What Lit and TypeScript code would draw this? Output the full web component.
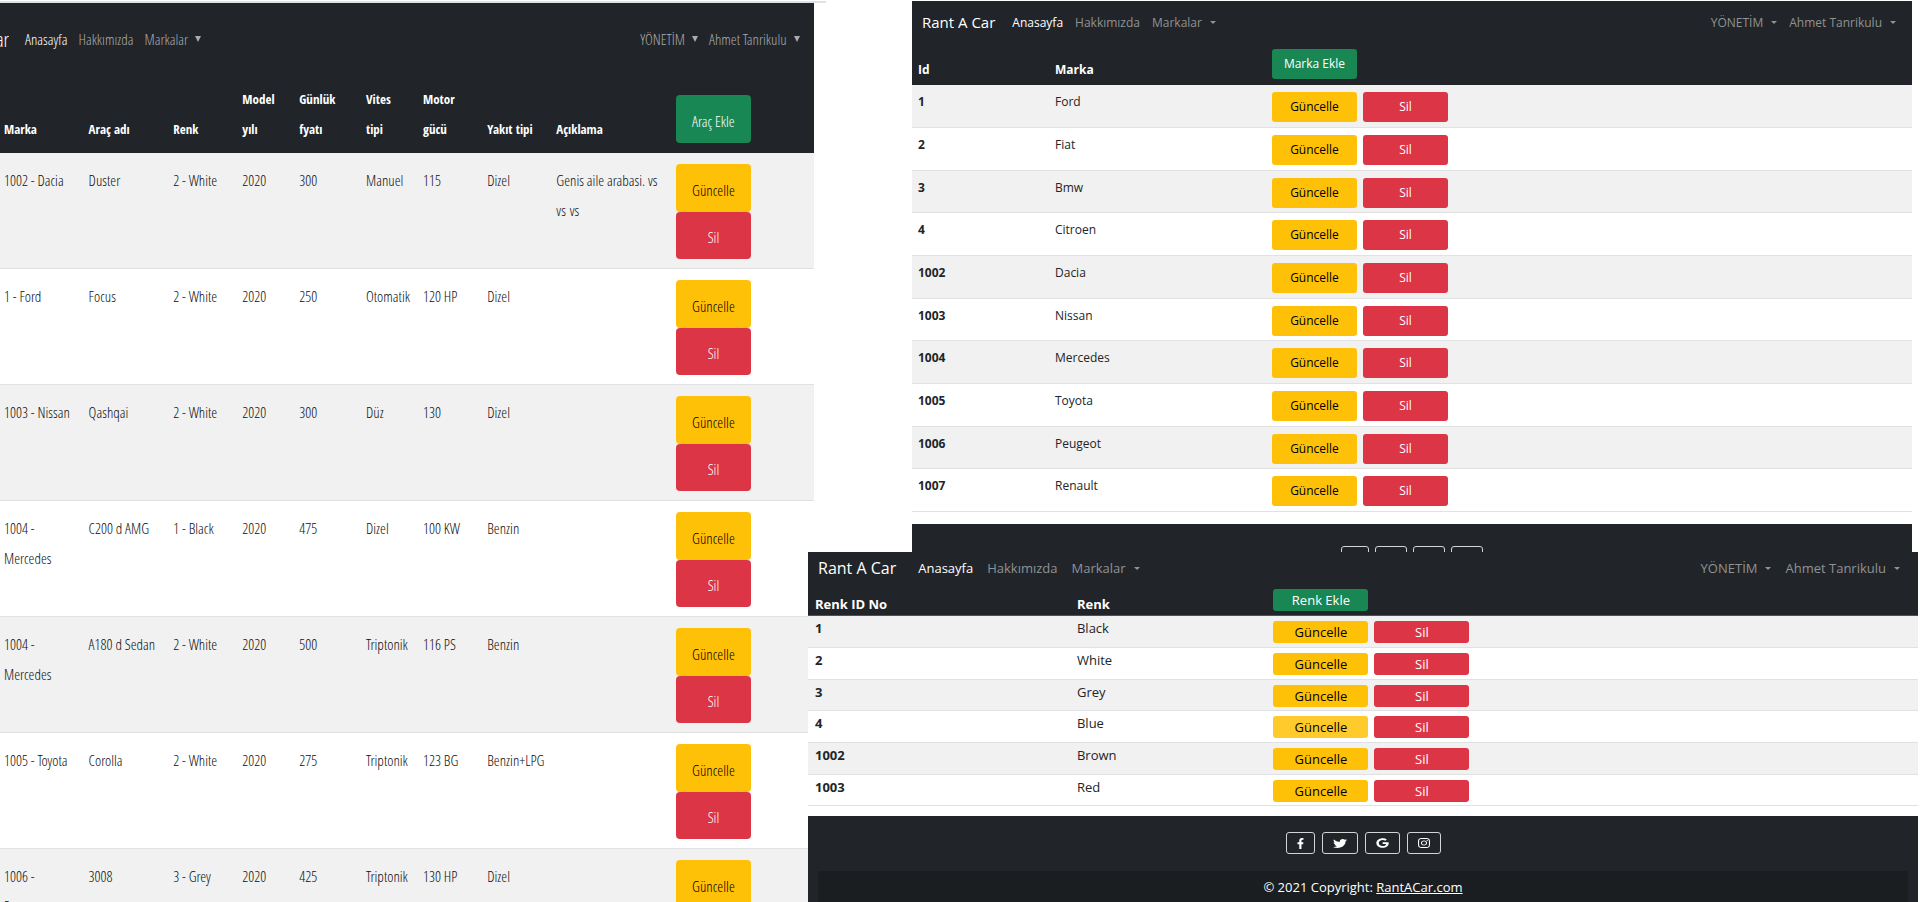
import { LitElement, html, css, svg, nothing } from "lit";
import { customElement } from "lit/decorators.js";
import { classMap } from "lit/directives/class-map.js";

interface Car {
  brand: string;
  name: string;
  color: string;
  year: number;
  price: number;
  gear: string;
  power: string;
  fuel: string;
  note: string;
}

interface Entry {
  id: number;
  label: string;
  active?: boolean;
}

const CARS: Car[] = [
  { brand: "1002 - Dacia", name: "Duster", color: "2 - White", year: 2020, price: 300, gear: "Manuel", power: "115", fuel: "Dizel", note: "Genis aile arabasi. vs vs\u00a0vs" },
  { brand: "1 - Ford", name: "Focus", color: "2 - White", year: 2020, price: 250, gear: "Otomatik", power: "120 HP", fuel: "Dizel", note: "" },
  { brand: "1003 - Nissan", name: "Qashqai", color: "2 - White", year: 2020, price: 300, gear: "Düz", power: "130", fuel: "Dizel", note: "" },
  { brand: "1004 - Mercedes", name: "C200 d AMG", color: "1 - Black", year: 2020, price: 475, gear: "Dizel", power: "100 KW", fuel: "Benzin", note: "" },
  { brand: "1004 - Mercedes", name: "A180 d Sedan", color: "2 - White", year: 2020, price: 500, gear: "Triptonik", power: "116 PS", fuel: "Benzin", note: "" },
  { brand: "1005 - Toyota", name: "Corolla", color: "2 - White", year: 2020, price: 275, gear: "Triptonik", power: "123 BG", fuel: "Benzin+LPG", note: "" },
  { brand: "1006 - Peugeot", name: "3008", color: "3 - Grey", year: 2020, price: 425, gear: "Triptonik", power: "130 HP", fuel: "Dizel", note: "" },
];

const BRANDS: Entry[] = [
  { id: 1, label: "Ford" },
  { id: 2, label: "Fiat" },
  { id: 3, label: "Bmw" },
  { id: 4, label: "Citroen" },
  { id: 1002, label: "Dacia" },
  { id: 1003, label: "Nissan" },
  { id: 1004, label: "Mercedes" },
  { id: 1005, label: "Toyota" },
  { id: 1006, label: "Peugeot" },
  { id: 1007, label: "Renault" },
];

const COLORS: Entry[] = [
  { id: 1, label: "Black" },
  { id: 2, label: "White" },
  { id: 3, label: "Grey" },
  { id: 4, label: "Blue", active: true },
  { id: 1002, label: "Brown" },
  { id: 1003, label: "Red" },
];

const SOCIAL = [
  { name: "Facebook", cls: "fb", box: "0 0 320 512", path: svg`<path d="M279.14 288l14.22-92.66h-88.91v-60.13c0-25.35 12.42-50.06 52.24-50.06h40.42V6.26S260.43 0 225.36 0c-73.22 0-121.08 44.38-121.08 124.72v70.62H22.89V288h81.39v224h100.17V288z"/>` },
  { name: "Twitter", cls: "tw", box: "0 0 512 512", path: svg`<path d="M459.37 151.716c.325 4.548.325 9.097.325 13.645 0 138.72-105.583 298.558-298.558 298.558-59.452 0-114.68-17.219-161.137-47.106 8.447.974 16.568 1.299 25.34 1.299 49.055 0 94.213-16.568 130.274-44.832-46.132-.975-84.792-31.188-98.112-72.772 6.498.974 12.995 1.624 19.818 1.624 9.421 0 18.843-1.3 27.614-3.573-48.081-9.747-84.143-51.98-84.143-102.985v-1.299c13.969 7.797 30.214 12.67 47.431 13.319-28.264-18.843-46.781-51.005-46.781-87.391 0-19.492 5.197-37.36 14.294-52.954 51.655 63.675 129.3 105.258 216.365 109.807-1.624-7.797-2.599-15.918-2.599-24.04 0-57.828 46.782-104.934 104.934-104.934 30.213 0 57.502 12.67 76.67 33.137 23.715-4.548 46.456-13.32 66.599-25.34-7.798 24.366-24.366 44.833-46.132 57.827 21.117-2.273 41.584-8.122 60.426-16.243-14.292 20.791-32.161 39.308-52.628 54.253z"/>` },
  { name: "Google", cls: "go", box: "0 0 512 512", path: svg`<path d="M262 8C123 8 14 117 14 256s109 248 248 248c143 0 238-98 238-242 0-20-2-33-5-47H262v86h141c-8 50-55 110-141 110-85 0-154-70-154-155s69-155 154-155c48 0 81 20 99 38l67-65C385 33 329 8 262 8z"/>` },
  { name: "Instagram", cls: "ig", box: "0 32 448 448", path: svg`<path d="M224.1 141c-63.6 0-114.9 51.3-114.9 114.9s51.3 114.9 114.9 114.9S339 319.5 339 255.9 287.7 141 224.1 141zm0 189.6c-41.1 0-74.7-33.5-74.7-74.7s33.5-74.7 74.7-74.7 74.7 33.5 74.7 74.7-33.6 74.7-74.7 74.7zm146.4-194.3c0 14.9-12 26.8-26.8 26.8-14.9 0-26.8-12-26.8-26.8s12-26.8 26.8-26.8 26.8 12 26.8 26.8zm76.1 27.2c-1.7-35.9-9.9-67.7-36.2-93.9-26.2-26.2-58-34.4-93.9-36.2-37-2.1-147.9-2.1-184.9 0-35.8 1.7-67.6 9.9-93.9 36.1s-34.4 58-36.2 93.9c-2.1 37-2.1 147.9 0 184.9 1.7 35.9 9.9 67.7 36.2 93.9s58 34.4 93.9 36.2c37 2.1 147.9 2.1 184.9 0 35.9-1.7 67.7-9.9 93.9-36.2 26.2-26.2 34.4-58 36.2-93.9 2.1-37 2.1-147.8 0-184.8zM398.8 388c-7.8 19.6-22.9 34.7-42.6 42.6-29.5 11.7-99.5 9-132.1 9s-102.7 2.6-132.1-9c-19.6-7.8-34.7-22.9-42.6-42.6-11.7-29.5-9-99.5-9-132.1s-2.6-102.7 9-132.1c7.8-19.6 22.9-34.7 42.6-42.6 29.5-11.7 99.5-9 132.1-9s102.7-2.6 132.1 9c19.6 7.8 34.7 22.9 42.6 42.6 11.7 29.5 9 99.5 9 132.1s2.7 102.7-9 132.1z"/>` },
];

@customElement("app-root")
export class AppRoot extends LitElement {
  static styles = css`
    :host {
      display: block;
      position: relative;
      height: 100vh;
      overflow: hidden;
      background: #fff;
      color: #212529;
      font-family: "Open Sans", "Noto Sans", sans-serif;
    }
    * {
      box-sizing: border-box;
    }
    .window {
      position: absolute;
      overflow: hidden;
      background: #fff;
      font-size: var(--text);
    }
    .cars {
      --text: 15px;
      --brand: 20px;
      --nav: 70px;
      --nav-gap: 11px;
      --caret-gap: 7px;
      --caret: 3px;
      --caret-h: 6px;
      --btn-w: 75px;
      --btn-h: 48px;
      --pad: 4px;
      top: 1px;
      left: 0;
      width: 43%;
      bottom: 0;
      border-top: 2px solid #dee2e6;
      color: #0c0e10;
      font-family: "Open Sans Condensed Light", "Roboto Condensed", "Open Sans", sans-serif;
    }
    .cars .page {
      width: calc(100% - 12px);
    }
    .brands {
      --text: 12px;
      --brand: 15px;
      --nav: 42px;
      --nav-gap: 12px;
      --caret-gap: 8px;
      --caret: 3px;
      --caret-h: 3px;
      --btn-w: 85px;
      --btn-h: 30px;
      --pad: 6px;
      top: 1px;
      left: 912px;
      right: 8px;
    }
    .colors {
      --text: 13px;
      --brand: 16px;
      --nav: 32px;
      --nav-gap: 14px;
      --caret-gap: 8px;
      --caret: 3px;
      --caret-h: 3px;
      --btn-w: 95px;
      --btn-h: 22px;
      --pad: 7px;
      top: 552px;
      left: 808px;
      right: 2px;
      bottom: 0;
    }

    .nav {
      display: flex;
      align-items: center;
      gap: var(--nav-gap);
      height: var(--nav);
      background: #212529;
      white-space: nowrap;
    }
    .brands .nav {
      padding: 0 16px 0 10px;
    }
    .colors .nav {
      padding: 0 18px 0 10px;
    }
    .cars .nav {
      padding: 2px 14px 0 0;
    }
    .logo {
      display: flex;
      justify-content: flex-end;
      color: #fff;
      font-size: var(--brand);
      text-decoration: none;
      margin-right: 5px;
    }
    .cars .logo {
      width: 9px;
      overflow: hidden;
    }
    .link {
      border: 0;
      padding: 0;
      background: none;
      font: inherit;
      color: #909294;
      text-decoration: none;
      display: flex;
      align-items: center;
      gap: var(--caret-gap);
    }
    .cars .link {
      color: #a9abad;
    }
    .link.current,
    .cars .link.current {
      color: #fff;
    }
    .caret {
      border: solid transparent;
      border-width: var(--caret-h) var(--caret) 0;
      border-top-color: currentColor;
    }
    .spacer {
      flex: 1;
    }

    table {
      width: 100%;
      table-layout: fixed;
      border-collapse: separate;
      border-spacing: 0;
    }
    thead th {
      background: #212529;
      color: #fff;
      vertical-align: bottom;
      white-space: pre-line;
    }
    th,
    td {
      padding: 0 var(--pad);
      text-align: left;
      vertical-align: top;
    }
    tbody th,
    tbody td {
      border-bottom: 1px solid #dfe1e3;
    }
    tbody tr:nth-child(odd) {
      background: #f1f1f1;
    }
    .btn {
      display: block;
      width: var(--btn-w);
      height: var(--btn-h);
      border: 0;
      border-radius: 3px;
      padding: 0;
      font: inherit;
      font-size: var(--text);
      font-weight: 400;
      color: #fff;
    }
    .add {
      background: #198754;
    }
    .edit {
      background: #ffc107;
      color: #000;
    }
    .edit.active {
      background: #ffca2c;
    }
    .remove {
      background: #dc3545;
    }
    .actions {
      display: flex;
      gap: 6px;
    }
    .cars .actions {
      flex-direction: column;
      gap: 0;
    }
    .cars .btn {
      border-radius: 4px;
      padding-top: 3px;
    }

    .cars th,
    .cars td {
      line-height: 30px;
    }
    .cars thead th {
      font-family: "Open Sans Condensed", "Roboto Condensed", "Open Sans", sans-serif;
      font-size: 13px;
      padding-bottom: 9px;
    }
    .cars thead th:last-child {
      font-family: inherit;
      padding-bottom: 10px;
    }
    .cars tbody td {
      padding-top: 12px;
    }
    .cars tbody td:first-child {
      padding-right: 10px;
    }
    .cars tbody td:last-child {
      padding-top: 11px;
    }
    .cars thead tr {
      height: 80px;
    }
    .cars tbody tr {
      height: 116px;
    }
    .cars .remove {
      height: 47px;
    }

    .brands thead tr {
      height: 42px;
    }
    .brands thead th {
      line-height: 18px;
      padding-bottom: 6px;
    }
    .brands tbody tr {
      height: 43px;
    }
    .brands tbody tr:nth-child(3n) {
      height: 42px;
    }
    .brands tbody th,
    .brands tbody td {
      line-height: 20px;
      padding-top: 7px;
    }

    .colors .logo {
      margin-right: 8px;
    }
    .colors thead tr {
      height: 32px;
    }
    .colors thead th {
      line-height: 14px;
      padding-bottom: 4px;
      border-bottom: 1px solid #4d5154;
    }
    .colors tbody tr {
      height: 32px;
    }
    .colors tbody tr:nth-child(3n) {
      height: 31px;
    }
    .colors tbody th,
    .colors tbody td {
      line-height: 14px;
      padding-top: 5px;
    }

    footer {
      margin-top: 12px;
      background: #212529;
      color: #fff;
    }
    .colors footer {
      margin-top: 10px;
    }
    .social {
      display: flex;
      justify-content: center;
      gap: 6px;
      padding: 22px 0 24px;
    }
    .colors .social {
      padding: 16px 0 17px;
      gap: 7px;
    }
    .social a {
      display: flex;
      align-items: center;
      justify-content: center;
      height: var(--btn-h);
      padding: 0 10px;
      border: 1px solid #d3d4d5;
      border-radius: 3px;
      color: #fff;
    }
    .social svg {
      height: 10px;
      fill: currentColor;
      display: block;
    }
    .colors .fb {
      width: 7px;
      height: 11px;
    }
    .colors .tw {
      width: 14px;
      height: 11px;
    }
    .colors .go {
      width: 13px;
    }
    .colors .ig {
      width: 12px;
    }
    .copy {
      margin: 0 10px;
      padding: 8px 0;
      line-height: 16px;
      text-align: center;
      background: #1b1e21;
      min-height: 40px;
    }
    .copy a {
      color: #fff;
    }
    .c1 { width: 13.7%; }
    .c2 { width: 21.7%; }
    .k1 { width: 23.6%; }
    .k2 { width: 17.7%; }
    .brand-col { width: 10.4%; }
    .color-col { width: 8.5%; }
    .year-col { width: 7%; }
    .price-col { width: 8.2%; }
    .power-col { width: 7.9%; }
    .note-col { width: 14.7%; }
    .action-col { width: 17.4%; }
  `;

  private nav(brand: string) {
    return html`<nav class="nav" aria-label="Rant A Car">
      <a class="logo" href="#">${brand}</a>
      <a class="link current" href="#">Anasayfa</a>
      <a class="link" href="#">Hakkımızda</a>
      <button class="link">Markalar<span class="caret"></span></button>
      <span class="spacer"></span>
      <button class="link">YÖNETİM<span class="caret"></span></button>
      <button class="link">Ahmet Tanrikulu<span class="caret"></span></button>
    </nav>`;
  }

  private actions(active = false) {
    return html`<div class="actions">
      <button class=${classMap({ btn: true, edit: true, active })}>Güncelle</button>
      <button class="btn remove">Sil</button>
    </div>`;
  }

  private footer(copy: boolean) {
    return html`<footer>
      <div class="social">
        ${SOCIAL.map((s) => html`<a href="#" aria-label=${s.name}><svg class=${s.cls} viewBox=${s.box} preserveAspectRatio="none">${s.path}</svg></a>`)}
      </div>
      ${copy ? html`<div class="copy">© 2021 Copyright: <a href="#">RantACar.com</a></div>` : nothing}
    </footer>`;
  }

  private entries(rows: Entry[], heads: string[], add: string, cols: string[]) {
    return html`<table>
      <colgroup><col class=${cols[0]} /><col class=${cols[1]} /><col /></colgroup>
      <thead>
        <tr>
          <th>${heads[0]}</th>
          <th>${heads[1]}</th>
          <th><button class="btn add">${add}</button></th>
        </tr>
      </thead>
      <tbody>
        ${rows.map((r) => html`<tr>
          <th scope="row">${r.id}</th>
          <td>${r.label}</td>
          <td>${this.actions(r.active)}</td>
        </tr>`)}
      </tbody>
    </table>`;
  }

  private cars() {
    const cols = ["brand", "brand", "color", "year", "price", "year", "power", "color", "note", "action"];
    const heads = ["Marka", "Araç adı", "Renk", "Model\nyılı", "Günlük\nfyatı", "Vites\ntipi", "Motor\ngücü", "Yakıt tipi", "Açıklama"];
    return html`<table>
      <colgroup>${cols.map((c) => html`<col class="${c}-col" />`)}</colgroup>
      <thead>
        <tr>
          ${heads.map((h) => html`<th>${h}</th>`)}
          <th><button class="btn add">Araç Ekle</button></th>
        </tr>
      </thead>
      <tbody>
        ${CARS.map((c) => html`<tr>
          <td>${c.brand}</td>
          <td>${c.name}</td>
          <td>${c.color}</td>
          <td>${c.year}</td>
          <td>${c.price}</td>
          <td>${c.gear}</td>
          <td>${c.power}</td>
          <td>${c.fuel}</td>
          <td>${c.note}</td>
          <td>${this.actions()}</td>
        </tr>`)}
      </tbody>
    </table>`;
  }

  render() {
    return html`
      <section class="window cars"><div class="page">${this.nav("Rant A Car")}${this.cars()}</div></section>
      <section class="window brands">
        ${this.nav("Rant A Car")}
        ${this.entries(BRANDS, ["Id", "Marka"], "Marka Ekle", ["c1", "c2"])}
        ${this.footer(false)}
      </section>
      <section class="window colors">
        ${this.nav("Rant A Car")}
        ${this.entries(COLORS, ["Renk ID No", "Renk"], "Renk Ekle", ["k1", "k2"])}
        ${this.footer(true)}
      </section>
    `;
  }
}
